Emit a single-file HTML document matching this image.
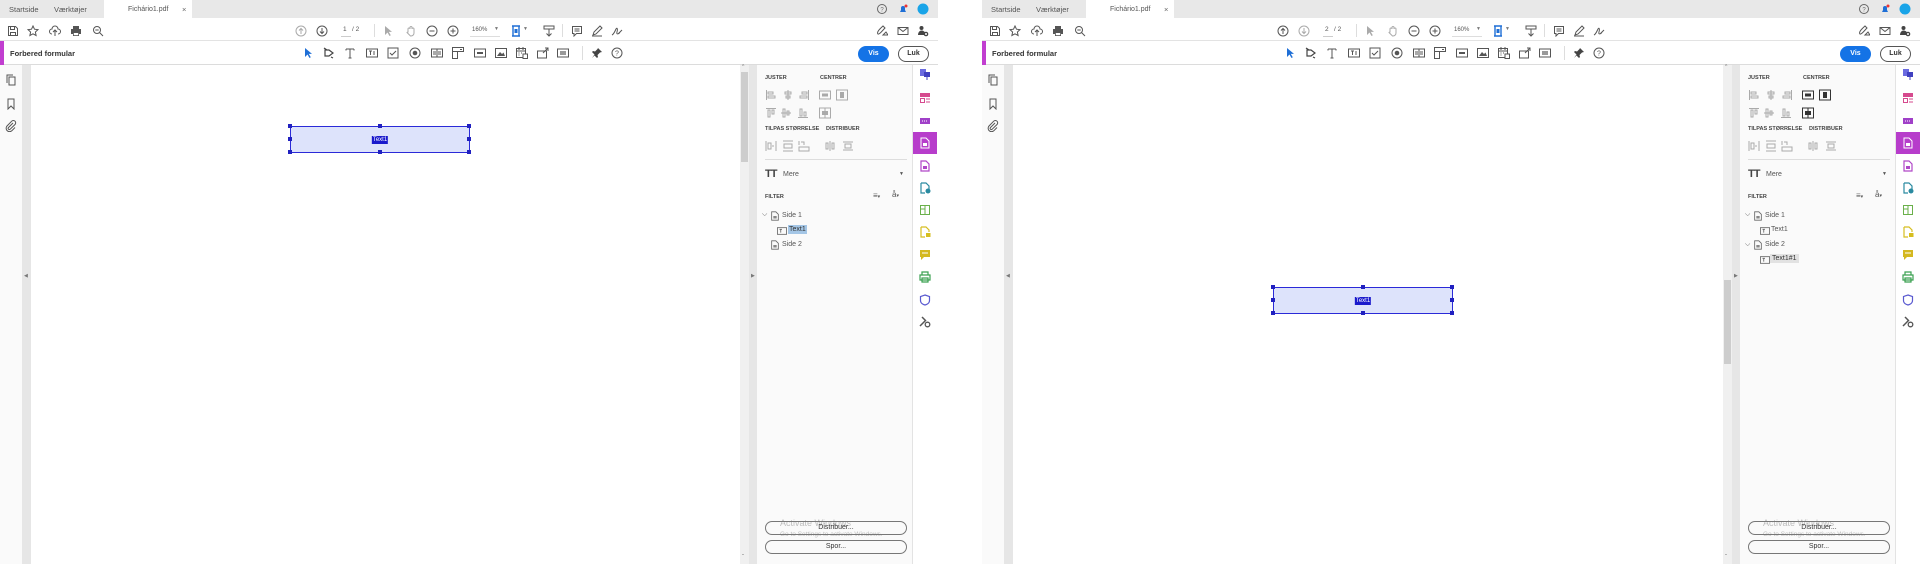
<!DOCTYPE html>
<html><head><meta charset="utf-8"><style>
*{margin:0;padding:0;box-sizing:border-box}
body{width:1920px;height:564px;background:#fff;position:relative;overflow:hidden;font-family:"Liberation Sans",sans-serif;color:#333}
.w{position:absolute;top:0;height:564px;width:938px;overflow:hidden;background:#fff}
.a{position:absolute}
.tabs{left:0;top:0;width:100%;height:18px;background:#e8e8e8}
.t{font-size:7.5px;color:#555;position:absolute;top:5px}
.act{left:104px;top:0;width:88px;height:19px;background:#fff}
.tb{left:0;top:18px;width:100%;height:23px;background:#fff;border-bottom:1px solid #e3e3e3}
.fb{left:0;top:41px;width:100%;height:24px;background:#fff;border-bottom:1px solid #dcdcdc}
.ic{position:absolute;width:12px;height:12px}
.ic svg{width:100%;height:100%;display:block}
.gstrip{left:22px;top:65px;width:9px;height:499px;background:#e6e6e6}
.nav{left:0;top:65px;width:22px;height:499px;background:#fafafa}
.vsb{top:65px;width:9px;height:499px;background:#f0f0f0}
.div{top:65px;width:9px;height:499px;background:#e6e6e6}
.panel{top:65px;width:156px;height:499px;background:#fafafa;border-right:1px solid #e3e3e3}
.strip{top:65px;width:25px;height:499px;background:#fff}
.h{font-size:5.5px;font-weight:bold;color:#444;position:absolute}
.s{font-size:7px;color:#555;position:absolute}
.btn{position:absolute;width:142px;height:14px;border:1px solid #777;border-radius:8px;font-size:7px;color:#333;text-align:center;line-height:12px}
.field{position:absolute;width:180px;height:27px;border:1.5px solid #2a2ad8;background:#dde3fb}
.hd{position:absolute;width:4px;height:4px;background:#2020c0}
.fl{position:absolute;left:50%;top:50%;transform:translate(-50%,-50%);background:#1a1acc;color:#fff;font-size:6px;padding:0 1px;line-height:8px}
.wm{position:absolute;color:#bdbdbd;font-size:9px}
</style></head><body>

<!-- ================= LEFT WINDOW ================= -->
<div class="w" style="left:0">
 <div class="a tabs"></div>
 <div class="a act"></div>
 <div class="t" style="left:9px">Startside</div>
 <div class="t" style="left:54px">Værktøjer</div>
 <div class="t" style="left:128px;top:6px;font-size:7px">Fichário1.pdf</div>
 <div class="t" style="left:182px;color:#666">×</div>
 <div class="ic" style="left:876px;top:3px"><svg viewBox="0 0 12 12"><circle cx="6" cy="6" r="4.5" fill="none" stroke="#666"/><text x="6" y="8.5" font-size="6" text-anchor="middle" fill="#666">?</text></svg></div>
 <div class="ic" style="left:897px;top:3px"><svg viewBox="0 0 12 12"><path d="M3 9h6L8 7V5a2 2 0 0 0-4 0v2z" fill="#1f6fd6"/><circle cx="9" cy="3" r="1.5" fill="#e33"/></svg></div>
 <div class="ic" style="left:917px;top:3px"><svg viewBox="0 0 12 12"><circle cx="6" cy="6" r="5.5" fill="#19a4e8"/></svg></div>

 <div class="a tb"></div>
 <div class="ic" style="left:7px;top:25px"><svg viewBox="0 0 12 12"><path d="M1.5 1.5h7l2 2v7h-9z M3.5 1.5v3h4v-3 M3.5 10.5v-3h5v3" fill="none" stroke="#555"/></svg></div>
 <div class="ic" style="left:27px;top:25px"><svg viewBox="0 0 12 12"><path d="M6 1l1.5 3.2 3.5.4-2.6 2.4.7 3.5L6 8.8 2.9 10.5l.7-3.5L1 4.6l3.5-.4z" fill="none" stroke="#555"/></svg></div>
 <div class="ic" style="left:49px;top:25px"><svg viewBox="0 0 12 12"><path d="M3 9a2.5 2.5 0 0 1 0-5 3 3 0 0 1 6 0 2.5 2.5 0 0 1 0 5M6 11V5M4 7l2-2 2 2" fill="none" stroke="#555"/></svg></div>
 <div class="ic" style="left:70px;top:25px"><svg viewBox="0 0 12 12"><path d="M3 1h6v3H3zM1 4h10v5H1zM3 7h6v4H3z" fill="#555"/><rect x="3.8" y="8" width="4.4" height="2.2" fill="#fff"/></svg></div>
 <div class="ic" style="left:92px;top:25px"><svg viewBox="0 0 12 12"><circle cx="5" cy="5" r="3.5" fill="none" stroke="#555"/><path d="M7.5 7.5l3.5 3.5M3.3 5h3.4" stroke="#555"/></svg></div>
 <div class="ic" style="left:295px;top:25px"><svg viewBox="0 0 12 12"><circle cx="6" cy="6" r="5" fill="none" stroke="#aaa"/><path d="M6 9V3.5M4 5.5l2-2 2 2" fill="none" stroke="#aaa"/></svg></div>
 <div class="ic" style="left:316px;top:25px"><svg viewBox="0 0 12 12"><circle cx="6" cy="6" r="5" fill="none" stroke="#555"/><path d="M6 3v5.5M4 6.5l2 2 2-2" fill="none" stroke="#555"/></svg></div>
 <div class="s" style="left:343px;top:26px;font-size:6.5px">1&nbsp;&nbsp; / 2</div>
 <div class="a" style="left:341px;top:36px;width:10px;height:1px;background:#ccc"></div>
 <div class="a" style="left:374px;top:24px;width:1px;height:13px;background:#ddd"></div>
 <div class="ic" style="left:382px;top:25px"><svg viewBox="0 0 12 12"><path d="M3 1v9l2.5-2.5 2 3.5 1.3-.7-2-3.4H10z" fill="#aaa"/></svg></div>
 <div class="ic" style="left:405px;top:25px"><svg viewBox="0 0 12 12"><path d="M3 7V4a1 1 0 0 1 2 0V2.5a1 1 0 0 1 2 0V4a1 1 0 0 1 2 0v4a3 3 0 0 1-3 3H5.5L2 7.5a1 1 0 0 1 1-.5z" fill="none" stroke="#aaa"/></svg></div>
 <div class="ic" style="left:426px;top:25px"><svg viewBox="0 0 12 12"><circle cx="6" cy="6" r="5" fill="none" stroke="#555"/><path d="M3.5 6h5" stroke="#555"/></svg></div>
 <div class="ic" style="left:447px;top:25px"><svg viewBox="0 0 12 12"><circle cx="6" cy="6" r="5" fill="none" stroke="#555"/><path d="M3.5 6h5M6 3.5v5" stroke="#555"/></svg></div>
 <div class="s" style="left:472px;top:27px;font-size:6px">160%</div>
 <div class="s" style="left:494px;top:26px;font-size:5px;color:#777">▼</div>
 <div class="a" style="left:470px;top:36px;width:30px;height:1px;background:#ddd"></div>
 <div class="ic" style="left:511px;top:25px"><svg viewBox="0 0 12 12"><path d="M1 1h8M1 11h8M2 1v10M8 1v10" stroke="#1f6fd6" stroke-width="1.4"/><rect x="3.5" y="4" width="3" height="4" fill="#1f6fd6"/></svg></div>
 <div class="s" style="left:523px;top:26px;font-size:5px;color:#777">▼</div>
 <div class="ic" style="left:543px;top:25px"><svg viewBox="0 0 12 12"><rect x="1" y="1" width="10" height="3" fill="none" stroke="#555"/><path d="M6 4v7M3.5 8.5L6 11l2.5-2.5" fill="none" stroke="#555"/></svg></div>
 <div class="a" style="left:562px;top:24px;width:1px;height:13px;background:#ddd"></div>
 <div class="ic" style="left:571px;top:25px"><svg viewBox="0 0 12 12"><path d="M1.5 1.5h9v7h-5l-2.5 2.5v-2.5h-1.5z M3.5 4h5M3.5 6h5" fill="none" stroke="#555"/></svg></div>
 <div class="ic" style="left:591px;top:25px"><svg viewBox="0 0 12 12"><path d="M2 10l1-3 6-6 2 2-6 6zM1 11h10" fill="none" stroke="#555"/></svg></div>
 <div class="ic" style="left:611px;top:25px"><svg viewBox="0 0 12 12"><path d="M1 10c2-1 3-4 4-6s2 0 1 3 2 2 3 0M7 9l4-4" fill="none" stroke="#555"/></svg></div>
 <div class="ic" style="left:876px;top:25px"><svg viewBox="0 0 12 12"><path d="M2 9c-2-2 3-6 5-8l2 2c-2 2-6 7-7 6zM7 10l3-3 2 3z" fill="none" stroke="#555"/></svg></div>
 <div class="ic" style="left:897px;top:25px"><svg viewBox="0 0 12 12"><rect x="1" y="2.5" width="10" height="7" fill="none" stroke="#555"/><path d="M1 2.5l5 4 5-4" fill="none" stroke="#555"/></svg></div>
 <div class="ic" style="left:917px;top:25px"><svg viewBox="0 0 12 12"><circle cx="4.5" cy="3" r="2" fill="#444"/><path d="M1 10c0-3 2-4.5 3.5-4.5S8 6.5 8 8v2z" fill="#444"/><circle cx="9" cy="9" r="2.3" fill="#444"/><circle cx="9" cy="9" r="1" fill="#fff"/></svg></div>

 <div class="a fb"></div>
 <div class="a" style="left:0;top:41px;width:4px;height:24px;background:#c13ed0"></div>
 <div class="a" style="left:10px;top:49px;font-size:7.5px;font-weight:bold;color:#333">Forbered formular</div>
 <div class="ic" style="left:302px;top:47px"><svg viewBox="0 0 12 12"><path d="M3 1v9l2.5-2.5 2 3.5 1.3-.7-2-3.4H10z" fill="#1f6fd6"/></svg></div>
 <div class="ic" style="left:323px;top:47px"><svg viewBox="0 0 12 12"><path d="M2 3h4l4 3-4 3H2zM1 1l3 2M8 10l2 1" fill="none" stroke="#444" stroke-width="1.2"/></svg></div>
 <div class="ic" style="left:344px;top:47px"><svg viewBox="0 0 12 12"><path d="M2 2h8M6 2v9M2 2v1.5M10 2v1.5M4.5 11h3" fill="none" stroke="#555"/></svg></div>
 <div class="ic" style="left:366px;top:47px"><svg viewBox="0 0 12 12"><rect x=".5" y="2" width="11" height="8" fill="none" stroke="#555"/><path d="M3 4h3M4.5 4v4M8 4v4" stroke="#555"/></svg></div>
 <div class="ic" style="left:387px;top:47px"><svg viewBox="0 0 12 12"><rect x="1" y="1" width="10" height="10" fill="none" stroke="#555"/><path d="M3 6l2 2 4-4" fill="none" stroke="#555"/></svg></div>
 <div class="ic" style="left:409px;top:47px"><svg viewBox="0 0 12 12"><circle cx="6" cy="6" r="5" fill="none" stroke="#555"/><circle cx="6" cy="6" r="2.3" fill="#555"/></svg></div>
 <div class="ic" style="left:431px;top:47px"><svg viewBox="0 0 12 12"><rect x=".5" y="2" width="11" height="8" fill="none" stroke="#555"/><path d="M6 2v8M2 5h3M7 5h3M2 7h3M7 7h3" stroke="#555"/></svg></div>
 <div class="ic" style="left:452px;top:47px"><svg viewBox="0 0 12 12"><rect x=".5" y=".5" width="11" height="4" fill="none" stroke="#555"/><rect x=".5" y="4.5" width="5" height="7" fill="none" stroke="#555"/><path d="M8 2.5h2" stroke="#555"/></svg></div>
 <div class="ic" style="left:474px;top:47px"><svg viewBox="0 0 12 12"><rect x=".5" y="2" width="11" height="8" fill="none" stroke="#555"/><path d="M3 6h6" stroke="#555" stroke-width="2"/></svg></div>
 <div class="ic" style="left:495px;top:47px"><svg viewBox="0 0 12 12"><rect x=".5" y="1.5" width="11" height="9" fill="none" stroke="#555"/><path d="M2 9l3-4 2 2 1.5-1.5L10 9z" fill="#555"/></svg></div>
 <div class="ic" style="left:516px;top:47px"><svg viewBox="0 0 12 12"><rect x=".5" y="1.5" width="9" height="9" fill="none" stroke="#555"/><path d="M.5 4h9M3 0v3M7 0v3M2.5 6h1M5 6h1M2.5 8h1" stroke="#555"/><rect x="7" y="7" width="4.5" height="4.5" fill="#fff" stroke="#555"/></svg></div>
 <div class="ic" style="left:537px;top:47px"><svg viewBox="0 0 12 12"><rect x=".5" y="4" width="9" height="7" fill="none" stroke="#555"/><path d="M6 6l5-5M8 1h3v3" fill="none" stroke="#555"/></svg></div>
 <div class="ic" style="left:557px;top:47px"><svg viewBox="0 0 12 12"><rect x=".5" y="2" width="11" height="8" fill="none" stroke="#555"/><rect x="3" y="4" width="6" height="4" fill="#999"/></svg></div>
 <div class="a" style="left:582px;top:46px;width:1px;height:14px;background:#ddd"></div>
 <div class="ic" style="left:591px;top:47px"><svg viewBox="0 0 12 12"><path d="M7 1l4 4-2 .5-2.5 2.5.5 2-1 1-2.5-2.5L1 11l2.5-3.5L1 5l1-1 2 .5L6.5 2z" fill="#444"/></svg></div>
 <div class="ic" style="left:611px;top:47px"><svg viewBox="0 0 12 12"><circle cx="6" cy="6" r="5" fill="none" stroke="#555"/><text x="6" y="8.5" font-size="7" text-anchor="middle" fill="#555">?</text></svg></div>
 <div class="a" style="left:858px;top:46px;width:31px;height:16px;border-radius:8px;background:#1473e6;color:#fff;font-size:7px;font-weight:bold;text-align:center;line-height:16px">Vis</div>
 <div class="a" style="left:898px;top:46px;width:31px;height:16px;border-radius:8px;border:1px solid #555;color:#333;font-size:7px;font-weight:bold;text-align:center;line-height:14px">Luk</div>

 <div class="a nav"></div>
 <div class="ic" style="left:5px;top:74px"><svg viewBox="0 0 12 12"><path d="M4 3h6v8H4zM2 9V1h6" fill="none" stroke="#555"/></svg></div>
 <div class="ic" style="left:5px;top:98px"><svg viewBox="0 0 12 12"><path d="M3 1h6v10L6 8l-3 3z" fill="none" stroke="#555"/></svg></div>
 <div class="ic" style="left:5px;top:120px"><svg viewBox="0 0 12 12"><path d="M8 3L3.5 7.5a1.2 1.2 0 0 0 1.7 1.7L10 4.5a2.3 2.3 0 0 0-3.3-3.3L2 6a3.4 3.4 0 0 0 4.8 4.8L10 7.5" fill="none" stroke="#555"/></svg></div>
 <div class="a gstrip"></div>
 <div class="a" style="left:24px;top:273px;font-size:5px;color:#777">◀</div>

 <div class="field" style="left:290px;top:126px">
  <div class="fl">Text1</div>
 </div>
 <div class="hd" style="left:288px;top:124px"></div><div class="hd" style="left:378px;top:124px"></div><div class="hd" style="left:467px;top:124px"></div>
 <div class="hd" style="left:288px;top:137px"></div><div class="hd" style="left:467px;top:137px"></div>
 <div class="hd" style="left:288px;top:150px"></div><div class="hd" style="left:378px;top:150px"></div><div class="hd" style="left:467px;top:150px"></div>

 <div class="a vsb" style="left:740px"></div>
 <div class="a" style="left:741px;top:72px;width:7px;height:90px;background:#cdcdcd"></div>
 <div class="a" style="left:742px;top:64px;font-size:5px;color:#777">^</div>
 <div class="a" style="left:742px;top:555px;font-size:6px;color:#777">ˇ</div>
 <div class="a div" style="left:749px"></div>
 <div class="a" style="left:751px;top:273px;font-size:5px;color:#777">▶</div>

 <div class="a panel" style="left:757px"></div>
 <div class="h" style="left:765px;top:75px">JUSTER</div>
 <div class="h" style="left:820px;top:75px">CENTRER</div>
 <div class="ic" style="left:765px;top:89px"><svg viewBox="0 0 12 12"><path d="M1.5 1v10M3 3h5v2H3zM3 7h7v2H3z" fill="none" stroke="#aaa"/></svg></div>
 <div class="ic" style="left:782px;top:89px"><svg viewBox="0 0 12 12"><path d="M6 1v10M3 3h6v2H3zM4 7h4v2H4z" fill="none" stroke="#aaa"/></svg></div>
 <div class="ic" style="left:798px;top:89px"><svg viewBox="0 0 12 12"><path d="M10.5 1v10M4 3h5v2H4zM2 7h7v2H2z" fill="none" stroke="#aaa"/></svg></div>
 <div class="ic" style="left:819px;top:89px"><svg viewBox="0 0 12 12"><rect x=".5" y="2" width="11" height="8" fill="none" stroke="#aaa"/><rect x="3" y="4.5" width="6" height="3" fill="#aaa"/></svg></div>
 <div class="ic" style="left:836px;top:89px"><svg viewBox="0 0 12 12"><rect x=".5" y="1" width="11" height="10" fill="none" stroke="#aaa"/><rect x="4" y="3" width="4" height="6" fill="#aaa"/></svg></div>
 <div class="ic" style="left:765px;top:107px"><svg viewBox="0 0 12 12"><path d="M1 1.5h10M3 3h2v7H3zM7 3h2v4H7z" fill="none" stroke="#aaa"/></svg></div>
 <div class="ic" style="left:780px;top:107px"><svg viewBox="0 0 12 12"><path d="M1 6h10M3 2h2v8H3zM7 4h2v4H7z" fill="none" stroke="#aaa"/></svg></div>
 <div class="ic" style="left:797px;top:107px"><svg viewBox="0 0 12 12"><path d="M1 10.5h10M3 2h2v7H3zM7 5h2v4H7z" fill="none" stroke="#aaa"/></svg></div>
 <div class="ic" style="left:819px;top:107px"><svg viewBox="0 0 12 12"><rect x=".5" y="1" width="11" height="10" fill="none" stroke="#aaa"/><rect x="3" y="4" width="6" height="4" fill="#aaa"/><path d="M6 1v10" stroke="#aaa"/></svg></div>
 <div class="h" style="left:765px;top:126px">TILPAS STØRRELSE</div>
 <div class="h" style="left:826px;top:126px">DISTRIBUER</div>
 <div class="ic" style="left:765px;top:140px"><svg viewBox="0 0 12 12"><path d="M1 1v10M11 1v10M3 3h3v6H3zM8 5v2" fill="none" stroke="#aaa"/></svg></div>
 <div class="ic" style="left:782px;top:140px"><svg viewBox="0 0 12 12"><path d="M1 1h10M1 11h10M2 4h8v4H2z" fill="none" stroke="#aaa"/></svg></div>
 <div class="ic" style="left:798px;top:140px"><svg viewBox="0 0 12 12"><path d="M1 1v4M1 7h10v4H1zM3 2h3v3" fill="none" stroke="#aaa"/></svg></div>
 <div class="ic" style="left:824px;top:140px"><svg viewBox="0 0 12 12"><path d="M2 3h2v6H2zM8 3h2v6H8zM6 1v10" fill="none" stroke="#aaa"/></svg></div>
 <div class="ic" style="left:842px;top:140px"><svg viewBox="0 0 12 12"><path d="M1 2h10M3 4h6v4H3zM1 10h10" fill="none" stroke="#aaa"/></svg></div>
 <div class="a" style="left:765px;top:159px;width:142px;height:1px;background:#ddd"></div>
 <div class="a" style="left:765px;top:168px;font-size:11px;font-weight:bold;color:#444;letter-spacing:-1px">TT</div>
 <div class="s" style="left:783px;top:171px">Mere</div>
 <div class="s" style="left:899px;top:171px;font-size:5px">▼</div>
 <div class="h" style="left:765px;top:194px">FILTER</div>
 <div class="s" style="left:873px;top:191px;font-size:8px">≡<span style="font-size:5px">▾</span></div>
 <div class="s" style="left:892px;top:190px;font-size:8px">å<span style="font-size:5px">▾</span></div>
 <div class="s" style="left:762px;top:211px;font-size:7px">⌵</div>
 <div class="ic" style="left:770px;top:211px;width:10px;height:10px"><svg viewBox="0 0 12 12"><path d="M2 1h5l3 3v7H2z" fill="none" stroke="#666"/><path d="M4 6h4v3H4z" fill="#888"/></svg></div>
 <div class="s" style="left:782px;top:212px">Side 1</div>
 <div class="ic" style="left:777px;top:226px;width:10px;height:10px"><svg viewBox="0 0 12 12"><rect x=".5" y="2" width="11" height="8" fill="none" stroke="#666"/><path d="M3 4h3M4.5 4v4" stroke="#666"/></svg></div>
 <div class="s" style="left:788px;top:225px;background:#a4c6e6;padding:1px 1px;color:#333">Text1</div>
 <div class="ic" style="left:770px;top:240px;width:10px;height:10px"><svg viewBox="0 0 12 12"><path d="M2 1h5l3 3v7H2z" fill="none" stroke="#666"/><path d="M4 6h4v3H4z" fill="#888"/></svg></div>
 <div class="s" style="left:782px;top:241px">Side 2</div>

 <div class="wm" style="left:780px;top:518px">Activate Windows</div>
 <div class="wm" style="left:780px;top:531px;font-size:6.5px">Go to Settings to activate Windows.</div>
 <div class="btn" style="left:765px;top:521px">Distribuer...</div>
 <div class="btn" style="left:765px;top:540px">Spor...</div>

 <div class="a strip" style="left:913px"></div>
 <div class="a" style="left:913px;top:132px;width:24px;height:22px;background:#b73dcb"></div>
 <div class="ic" style="left:919px;top:68px"><svg viewBox="0 0 12 12"><rect x="1" y="1" width="6" height="7" fill="#6a6ae0"/><rect x="5" y="4" width="6" height="5" fill="#4040c0"/><path d="M8 9v3" stroke="#4040c0"/></svg></div>
 <div class="ic" style="left:919px;top:92px"><svg viewBox="0 0 12 12"><rect x="1" y="1" width="10" height="4" fill="#d64a8e"/><rect x="1.5" y="6.5" width="4" height="4" fill="none" stroke="#d64a8e"/><path d="M7 7h4M7 10h4" stroke="#d64a8e"/></svg></div>
 <div class="ic" style="left:919px;top:115px"><svg viewBox="0 0 12 12"><rect x="1" y="3" width="10" height="6" fill="#a040c8"/><path d="M3 6h6" stroke="#fff" stroke-dasharray="1 1"/></svg></div>
 <div class="ic" style="left:919px;top:137px"><svg viewBox="0 0 12 12"><path d="M2 1h5l3 3v7H2z" fill="none" stroke="#fff"/><rect x="4" y="6" width="4" height="3" fill="#fff"/></svg></div>
 <div class="ic" style="left:919px;top:160px"><svg viewBox="0 0 12 12"><path d="M2 1h5l3 3v7H2z" fill="none" stroke="#b048c8" stroke-width="1.2"/><rect x="4" y="6" width="4" height="3" fill="#b048c8"/></svg></div>
 <div class="ic" style="left:919px;top:182px"><svg viewBox="0 0 12 12"><path d="M2 1h5l3 3v3M2 1v10h4" fill="none" stroke="#2a8aa0" stroke-width="1.2"/><circle cx="9" cy="9" r="2.5" fill="#2a8aa0"/></svg></div>
 <div class="ic" style="left:919px;top:204px"><svg viewBox="0 0 12 12"><rect x="1.5" y="1.5" width="9" height="9" fill="none" stroke="#6ab04a"/><path d="M6 1v10M2 5h4" stroke="#6ab04a"/></svg></div>
 <div class="ic" style="left:919px;top:226px"><svg viewBox="0 0 12 12"><path d="M2 1h5l3 3v2M2 1v10h4" fill="none" stroke="#d6be20" stroke-width="1.2"/><rect x="7" y="7" width="4.5" height="4" fill="#d6be20"/></svg></div>
 <div class="ic" style="left:919px;top:249px"><svg viewBox="0 0 12 12"><path d="M1 1h10v7H5l-3 3V8H1z" fill="#d4b820"/><path d="M3 4h6" stroke="#fff"/></svg></div>
 <div class="ic" style="left:919px;top:271px"><svg viewBox="0 0 12 12"><path d="M3 1h6v3H3zM1 4h10v5H1zM3 7h6v4H3z" fill="none" stroke="#3aa050" stroke-width="1.2"/></svg></div>
 <div class="ic" style="left:919px;top:294px"><svg viewBox="0 0 12 12"><path d="M6 1l4.5 1.5v4C10.5 9 8 10.5 6 11 4 10.5 1.5 9 1.5 6.5v-4z" fill="none" stroke="#5a5ad0" stroke-width="1.2"/></svg></div>
 <div class="ic" style="left:919px;top:316px"><svg viewBox="0 0 12 12"><path d="M1 10l5-5M3 1l4 4" stroke="#555" stroke-width="1.5"/><circle cx="8.5" cy="8.5" r="2.3" fill="none" stroke="#555" stroke-width="1.3"/></svg></div>
</div>

<!-- ================= RIGHT WINDOW ================= -->
<div class="w" style="left:982px">
 <div class="a tabs"></div>
 <div class="a act"></div>
 <div class="t" style="left:9px">Startside</div>
 <div class="t" style="left:54px">Værktøjer</div>
 <div class="t" style="left:128px;top:6px;font-size:7px">Fichário1.pdf</div>
 <div class="t" style="left:182px;color:#666">×</div>
 <div class="ic" style="left:876px;top:3px"><svg viewBox="0 0 12 12"><circle cx="6" cy="6" r="4.5" fill="none" stroke="#666"/><text x="6" y="8.5" font-size="6" text-anchor="middle" fill="#666">?</text></svg></div>
 <div class="ic" style="left:897px;top:3px"><svg viewBox="0 0 12 12"><path d="M3 9h6L8 7V5a2 2 0 0 0-4 0v2z" fill="#1f6fd6"/><circle cx="9" cy="3" r="1.5" fill="#e33"/></svg></div>
 <div class="ic" style="left:917px;top:3px"><svg viewBox="0 0 12 12"><circle cx="6" cy="6" r="5.5" fill="#19a4e8"/></svg></div>

 <div class="a tb"></div>
 <div class="ic" style="left:7px;top:25px"><svg viewBox="0 0 12 12"><path d="M1.5 1.5h7l2 2v7h-9z M3.5 1.5v3h4v-3 M3.5 10.5v-3h5v3" fill="none" stroke="#555"/></svg></div>
 <div class="ic" style="left:27px;top:25px"><svg viewBox="0 0 12 12"><path d="M6 1l1.5 3.2 3.5.4-2.6 2.4.7 3.5L6 8.8 2.9 10.5l.7-3.5L1 4.6l3.5-.4z" fill="none" stroke="#555"/></svg></div>
 <div class="ic" style="left:49px;top:25px"><svg viewBox="0 0 12 12"><path d="M3 9a2.5 2.5 0 0 1 0-5 3 3 0 0 1 6 0 2.5 2.5 0 0 1 0 5M6 11V5M4 7l2-2 2 2" fill="none" stroke="#555"/></svg></div>
 <div class="ic" style="left:70px;top:25px"><svg viewBox="0 0 12 12"><path d="M3 1h6v3H3zM1 4h10v5H1zM3 7h6v4H3z" fill="#555"/><rect x="3.8" y="8" width="4.4" height="2.2" fill="#fff"/></svg></div>
 <div class="ic" style="left:92px;top:25px"><svg viewBox="0 0 12 12"><circle cx="5" cy="5" r="3.5" fill="none" stroke="#555"/><path d="M7.5 7.5l3.5 3.5M3.3 5h3.4" stroke="#555"/></svg></div>
 <div class="ic" style="left:295px;top:25px"><svg viewBox="0 0 12 12"><circle cx="6" cy="6" r="5" fill="none" stroke="#555"/><path d="M6 9V3.5M4 5.5l2-2 2 2" fill="none" stroke="#555"/></svg></div>
 <div class="ic" style="left:316px;top:25px"><svg viewBox="0 0 12 12"><circle cx="6" cy="6" r="5" fill="none" stroke="#aaa"/><path d="M6 3v5.5M4 6.5l2 2 2-2" fill="none" stroke="#aaa"/></svg></div>
 <div class="s" style="left:343px;top:26px;font-size:6.5px">2&nbsp;&nbsp; / 2</div>
 <div class="a" style="left:341px;top:36px;width:10px;height:1px;background:#ccc"></div>
 <div class="a" style="left:374px;top:24px;width:1px;height:13px;background:#ddd"></div>
 <div class="ic" style="left:382px;top:25px"><svg viewBox="0 0 12 12"><path d="M3 1v9l2.5-2.5 2 3.5 1.3-.7-2-3.4H10z" fill="#aaa"/></svg></div>
 <div class="ic" style="left:405px;top:25px"><svg viewBox="0 0 12 12"><path d="M3 7V4a1 1 0 0 1 2 0V2.5a1 1 0 0 1 2 0V4a1 1 0 0 1 2 0v4a3 3 0 0 1-3 3H5.5L2 7.5a1 1 0 0 1 1-.5z" fill="none" stroke="#aaa"/></svg></div>
 <div class="ic" style="left:426px;top:25px"><svg viewBox="0 0 12 12"><circle cx="6" cy="6" r="5" fill="none" stroke="#555"/><path d="M3.5 6h5" stroke="#555"/></svg></div>
 <div class="ic" style="left:447px;top:25px"><svg viewBox="0 0 12 12"><circle cx="6" cy="6" r="5" fill="none" stroke="#555"/><path d="M3.5 6h5M6 3.5v5" stroke="#555"/></svg></div>
 <div class="s" style="left:472px;top:27px;font-size:6px">160%</div>
 <div class="s" style="left:494px;top:26px;font-size:5px;color:#777">▼</div>
 <div class="a" style="left:470px;top:36px;width:30px;height:1px;background:#ddd"></div>
 <div class="ic" style="left:511px;top:25px"><svg viewBox="0 0 12 12"><path d="M1 1h8M1 11h8M2 1v10M8 1v10" stroke="#1f6fd6" stroke-width="1.4"/><rect x="3.5" y="4" width="3" height="4" fill="#1f6fd6"/></svg></div>
 <div class="s" style="left:523px;top:26px;font-size:5px;color:#777">▼</div>
 <div class="ic" style="left:543px;top:25px"><svg viewBox="0 0 12 12"><rect x="1" y="1" width="10" height="3" fill="none" stroke="#555"/><path d="M6 4v7M3.5 8.5L6 11l2.5-2.5" fill="none" stroke="#555"/></svg></div>
 <div class="a" style="left:562px;top:24px;width:1px;height:13px;background:#ddd"></div>
 <div class="ic" style="left:571px;top:25px"><svg viewBox="0 0 12 12"><path d="M1.5 1.5h9v7h-5l-2.5 2.5v-2.5h-1.5z M3.5 4h5M3.5 6h5" fill="none" stroke="#555"/></svg></div>
 <div class="ic" style="left:591px;top:25px"><svg viewBox="0 0 12 12"><path d="M2 10l1-3 6-6 2 2-6 6zM1 11h10" fill="none" stroke="#555"/></svg></div>
 <div class="ic" style="left:611px;top:25px"><svg viewBox="0 0 12 12"><path d="M1 10c2-1 3-4 4-6s2 0 1 3 2 2 3 0M7 9l4-4" fill="none" stroke="#555"/></svg></div>
 <div class="ic" style="left:876px;top:25px"><svg viewBox="0 0 12 12"><path d="M2 9c-2-2 3-6 5-8l2 2c-2 2-6 7-7 6zM7 10l3-3 2 3z" fill="none" stroke="#555"/></svg></div>
 <div class="ic" style="left:897px;top:25px"><svg viewBox="0 0 12 12"><rect x="1" y="2.5" width="10" height="7" fill="none" stroke="#555"/><path d="M1 2.5l5 4 5-4" fill="none" stroke="#555"/></svg></div>
 <div class="ic" style="left:917px;top:25px"><svg viewBox="0 0 12 12"><circle cx="4.5" cy="3" r="2" fill="#444"/><path d="M1 10c0-3 2-4.5 3.5-4.5S8 6.5 8 8v2z" fill="#444"/><circle cx="9" cy="9" r="2.3" fill="#444"/><circle cx="9" cy="9" r="1" fill="#fff"/></svg></div>

 <div class="a fb"></div>
 <div class="a" style="left:0;top:41px;width:4px;height:24px;background:#c13ed0"></div>
 <div class="a" style="left:10px;top:49px;font-size:7.5px;font-weight:bold;color:#333">Forbered formular</div>
 <div class="ic" style="left:302px;top:47px"><svg viewBox="0 0 12 12"><path d="M3 1v9l2.5-2.5 2 3.5 1.3-.7-2-3.4H10z" fill="#1f6fd6"/></svg></div>
 <div class="ic" style="left:323px;top:47px"><svg viewBox="0 0 12 12"><path d="M2 3h4l4 3-4 3H2zM1 1l3 2M8 10l2 1" fill="none" stroke="#444" stroke-width="1.2"/></svg></div>
 <div class="ic" style="left:344px;top:47px"><svg viewBox="0 0 12 12"><path d="M2 2h8M6 2v9M2 2v1.5M10 2v1.5M4.5 11h3" fill="none" stroke="#555"/></svg></div>
 <div class="ic" style="left:366px;top:47px"><svg viewBox="0 0 12 12"><rect x=".5" y="2" width="11" height="8" fill="none" stroke="#555"/><path d="M3 4h3M4.5 4v4M8 4v4" stroke="#555"/></svg></div>
 <div class="ic" style="left:387px;top:47px"><svg viewBox="0 0 12 12"><rect x="1" y="1" width="10" height="10" fill="none" stroke="#555"/><path d="M3 6l2 2 4-4" fill="none" stroke="#555"/></svg></div>
 <div class="ic" style="left:409px;top:47px"><svg viewBox="0 0 12 12"><circle cx="6" cy="6" r="5" fill="none" stroke="#555"/><circle cx="6" cy="6" r="2.3" fill="#555"/></svg></div>
 <div class="ic" style="left:431px;top:47px"><svg viewBox="0 0 12 12"><rect x=".5" y="2" width="11" height="8" fill="none" stroke="#555"/><path d="M6 2v8M2 5h3M7 5h3M2 7h3M7 7h3" stroke="#555"/></svg></div>
 <div class="ic" style="left:452px;top:47px"><svg viewBox="0 0 12 12"><rect x=".5" y=".5" width="11" height="4" fill="none" stroke="#555"/><rect x=".5" y="4.5" width="5" height="7" fill="none" stroke="#555"/><path d="M8 2.5h2" stroke="#555"/></svg></div>
 <div class="ic" style="left:474px;top:47px"><svg viewBox="0 0 12 12"><rect x=".5" y="2" width="11" height="8" fill="none" stroke="#555"/><path d="M3 6h6" stroke="#555" stroke-width="2"/></svg></div>
 <div class="ic" style="left:495px;top:47px"><svg viewBox="0 0 12 12"><rect x=".5" y="1.5" width="11" height="9" fill="none" stroke="#555"/><path d="M2 9l3-4 2 2 1.5-1.5L10 9z" fill="#555"/></svg></div>
 <div class="ic" style="left:516px;top:47px"><svg viewBox="0 0 12 12"><rect x=".5" y="1.5" width="9" height="9" fill="none" stroke="#555"/><path d="M.5 4h9M3 0v3M7 0v3M2.5 6h1M5 6h1M2.5 8h1" stroke="#555"/><rect x="7" y="7" width="4.5" height="4.5" fill="#fff" stroke="#555"/></svg></div>
 <div class="ic" style="left:537px;top:47px"><svg viewBox="0 0 12 12"><rect x=".5" y="4" width="9" height="7" fill="none" stroke="#555"/><path d="M6 6l5-5M8 1h3v3" fill="none" stroke="#555"/></svg></div>
 <div class="ic" style="left:557px;top:47px"><svg viewBox="0 0 12 12"><rect x=".5" y="2" width="11" height="8" fill="none" stroke="#555"/><rect x="3" y="4" width="6" height="4" fill="#999"/></svg></div>
 <div class="a" style="left:582px;top:46px;width:1px;height:14px;background:#ddd"></div>
 <div class="ic" style="left:591px;top:47px"><svg viewBox="0 0 12 12"><path d="M7 1l4 4-2 .5-2.5 2.5.5 2-1 1-2.5-2.5L1 11l2.5-3.5L1 5l1-1 2 .5L6.5 2z" fill="#444"/></svg></div>
 <div class="ic" style="left:611px;top:47px"><svg viewBox="0 0 12 12"><circle cx="6" cy="6" r="5" fill="none" stroke="#555"/><text x="6" y="8.5" font-size="7" text-anchor="middle" fill="#555">?</text></svg></div>
 <div class="a" style="left:858px;top:46px;width:31px;height:16px;border-radius:8px;background:#1473e6;color:#fff;font-size:7px;font-weight:bold;text-align:center;line-height:16px">Vis</div>
 <div class="a" style="left:898px;top:46px;width:31px;height:16px;border-radius:8px;border:1px solid #555;color:#333;font-size:7px;font-weight:bold;text-align:center;line-height:14px">Luk</div>

 <div class="a nav"></div>
 <div class="ic" style="left:5px;top:74px"><svg viewBox="0 0 12 12"><path d="M4 3h6v8H4zM2 9V1h6" fill="none" stroke="#555"/></svg></div>
 <div class="ic" style="left:5px;top:98px"><svg viewBox="0 0 12 12"><path d="M3 1h6v10L6 8l-3 3z" fill="none" stroke="#555"/></svg></div>
 <div class="ic" style="left:5px;top:120px"><svg viewBox="0 0 12 12"><path d="M8 3L3.5 7.5a1.2 1.2 0 0 0 1.7 1.7L10 4.5a2.3 2.3 0 0 0-3.3-3.3L2 6a3.4 3.4 0 0 0 4.8 4.8L10 7.5" fill="none" stroke="#555"/></svg></div>
 <div class="a gstrip"></div>
 <div class="a" style="left:24px;top:273px;font-size:5px;color:#777">◀</div>

 <div class="field" style="left:291px;top:287px">
  <div class="fl">Text1</div>
 </div>
 <div class="hd" style="left:289px;top:285px"></div><div class="hd" style="left:379px;top:285px"></div><div class="hd" style="left:468px;top:285px"></div>
 <div class="hd" style="left:289px;top:298px"></div><div class="hd" style="left:468px;top:298px"></div>
 <div class="hd" style="left:289px;top:311px"></div><div class="hd" style="left:379px;top:311px"></div><div class="hd" style="left:468px;top:311px"></div>

 <div class="a vsb" style="left:741px"></div>
 <div class="a" style="left:742px;top:280px;width:7px;height:84px;background:#cdcdcd"></div>
 <div class="a" style="left:743px;top:64px;font-size:5px;color:#777">^</div>
 <div class="a" style="left:743px;top:555px;font-size:6px;color:#777">ˇ</div>
 <div class="a div" style="left:750px"></div>
 <div class="a" style="left:752px;top:273px;font-size:5px;color:#777">▶</div>

 <div class="a panel" style="left:758px"></div>
 <div class="h" style="left:766px;top:75px">JUSTER</div>
 <div class="h" style="left:821px;top:75px">CENTRER</div>
 <div class="ic" style="left:766px;top:89px"><svg viewBox="0 0 12 12"><path d="M1.5 1v10M3 3h5v2H3zM3 7h7v2H3z" fill="none" stroke="#aaa"/></svg></div>
 <div class="ic" style="left:783px;top:89px"><svg viewBox="0 0 12 12"><path d="M6 1v10M3 3h6v2H3zM4 7h4v2H4z" fill="none" stroke="#aaa"/></svg></div>
 <div class="ic" style="left:799px;top:89px"><svg viewBox="0 0 12 12"><path d="M10.5 1v10M4 3h5v2H4zM2 7h7v2H2z" fill="none" stroke="#aaa"/></svg></div>
 <div class="ic" style="left:820px;top:89px"><svg viewBox="0 0 12 12"><rect x=".5" y="2" width="11" height="8" fill="none" stroke="#333"/><rect x="3" y="4.5" width="6" height="3" fill="#333"/></svg></div>
 <div class="ic" style="left:837px;top:89px"><svg viewBox="0 0 12 12"><rect x=".5" y="1" width="11" height="10" fill="none" stroke="#333"/><rect x="4" y="3" width="4" height="6" fill="#333"/></svg></div>
 <div class="ic" style="left:766px;top:107px"><svg viewBox="0 0 12 12"><path d="M1 1.5h10M3 3h2v7H3zM7 3h2v4H7z" fill="none" stroke="#aaa"/></svg></div>
 <div class="ic" style="left:781px;top:107px"><svg viewBox="0 0 12 12"><path d="M1 6h10M3 2h2v8H3zM7 4h2v4H7z" fill="none" stroke="#aaa"/></svg></div>
 <div class="ic" style="left:798px;top:107px"><svg viewBox="0 0 12 12"><path d="M1 10.5h10M3 2h2v7H3zM7 5h2v4H7z" fill="none" stroke="#aaa"/></svg></div>
 <div class="ic" style="left:820px;top:107px"><svg viewBox="0 0 12 12"><rect x=".5" y="1" width="11" height="10" fill="none" stroke="#333"/><rect x="3" y="4" width="6" height="4" fill="#333"/><path d="M6 1v10" stroke="#333"/></svg></div>
 <div class="h" style="left:766px;top:126px">TILPAS STØRRELSE</div>
 <div class="h" style="left:827px;top:126px">DISTRIBUER</div>
 <div class="ic" style="left:766px;top:140px"><svg viewBox="0 0 12 12"><path d="M1 1v10M11 1v10M3 3h3v6H3zM8 5v2" fill="none" stroke="#aaa"/></svg></div>
 <div class="ic" style="left:783px;top:140px"><svg viewBox="0 0 12 12"><path d="M1 1h10M1 11h10M2 4h8v4H2z" fill="none" stroke="#aaa"/></svg></div>
 <div class="ic" style="left:799px;top:140px"><svg viewBox="0 0 12 12"><path d="M1 1v4M1 7h10v4H1zM3 2h3v3" fill="none" stroke="#aaa"/></svg></div>
 <div class="ic" style="left:825px;top:140px"><svg viewBox="0 0 12 12"><path d="M2 3h2v6H2zM8 3h2v6H8zM6 1v10" fill="none" stroke="#aaa"/></svg></div>
 <div class="ic" style="left:843px;top:140px"><svg viewBox="0 0 12 12"><path d="M1 2h10M3 4h6v4H3zM1 10h10" fill="none" stroke="#aaa"/></svg></div>
 <div class="a" style="left:766px;top:159px;width:142px;height:1px;background:#ddd"></div>
 <div class="a" style="left:766px;top:168px;font-size:11px;font-weight:bold;color:#444;letter-spacing:-1px">TT</div>
 <div class="s" style="left:784px;top:171px">Mere</div>
 <div class="s" style="left:900px;top:171px;font-size:5px">▼</div>
 <div class="h" style="left:766px;top:194px">FILTER</div>
 <div class="s" style="left:874px;top:191px;font-size:8px">≡<span style="font-size:5px">▾</span></div>
 <div class="s" style="left:893px;top:190px;font-size:8px">å<span style="font-size:5px">▾</span></div>
 <div class="s" style="left:763px;top:211px;font-size:7px">⌵</div>
 <div class="ic" style="left:771px;top:211px;width:10px;height:10px"><svg viewBox="0 0 12 12"><path d="M2 1h5l3 3v7H2z" fill="none" stroke="#666"/><path d="M4 6h4v3H4z" fill="#888"/></svg></div>
 <div class="s" style="left:783px;top:212px">Side 1</div>
 <div class="ic" style="left:778px;top:226px;width:10px;height:10px"><svg viewBox="0 0 12 12"><rect x=".5" y="2" width="11" height="8" fill="none" stroke="#666"/><path d="M3 4h3M4.5 4v4" stroke="#666"/></svg></div>
 <div class="s" style="left:789px;top:226px">Text1</div>
 <div class="s" style="left:763px;top:241px;font-size:7px">⌵</div>
 <div class="ic" style="left:771px;top:240px;width:10px;height:10px"><svg viewBox="0 0 12 12"><path d="M2 1h5l3 3v7H2z" fill="none" stroke="#666"/><path d="M4 6h4v3H4z" fill="#888"/></svg></div>
 <div class="s" style="left:783px;top:241px">Side 2</div>
 <div class="ic" style="left:778px;top:255px;width:10px;height:10px"><svg viewBox="0 0 12 12"><rect x=".5" y="2" width="11" height="8" fill="none" stroke="#666"/><path d="M3 4h3M4.5 4v4" stroke="#666"/></svg></div>
 <div class="s" style="left:788px;top:254px;background:#e2e2e2;padding:1px 2px;color:#333">Text1#1</div>

 <div class="wm" style="left:781px;top:518px">Activate Windows</div>
 <div class="wm" style="left:781px;top:531px;font-size:6.5px">Go to Settings to activate Windows.</div>
 <div class="btn" style="left:766px;top:521px">Distribuer...</div>
 <div class="btn" style="left:766px;top:540px">Spor...</div>

 <div class="a strip" style="left:914px"></div>
 <div class="a" style="left:914px;top:132px;width:24px;height:22px;background:#b73dcb"></div>
 <div class="ic" style="left:920px;top:68px"><svg viewBox="0 0 12 12"><rect x="1" y="1" width="6" height="7" fill="#6a6ae0"/><rect x="5" y="4" width="6" height="5" fill="#4040c0"/><path d="M8 9v3" stroke="#4040c0"/></svg></div>
 <div class="ic" style="left:920px;top:92px"><svg viewBox="0 0 12 12"><rect x="1" y="1" width="10" height="4" fill="#d64a8e"/><rect x="1.5" y="6.5" width="4" height="4" fill="none" stroke="#d64a8e"/><path d="M7 7h4M7 10h4" stroke="#d64a8e"/></svg></div>
 <div class="ic" style="left:920px;top:115px"><svg viewBox="0 0 12 12"><rect x="1" y="3" width="10" height="6" fill="#a040c8"/><path d="M3 6h6" stroke="#fff" stroke-dasharray="1 1"/></svg></div>
 <div class="ic" style="left:920px;top:137px"><svg viewBox="0 0 12 12"><path d="M2 1h5l3 3v7H2z" fill="none" stroke="#fff"/><rect x="4" y="6" width="4" height="3" fill="#fff"/></svg></div>
 <div class="ic" style="left:920px;top:160px"><svg viewBox="0 0 12 12"><path d="M2 1h5l3 3v7H2z" fill="none" stroke="#b048c8" stroke-width="1.2"/><rect x="4" y="6" width="4" height="3" fill="#b048c8"/></svg></div>
 <div class="ic" style="left:920px;top:182px"><svg viewBox="0 0 12 12"><path d="M2 1h5l3 3v3M2 1v10h4" fill="none" stroke="#2a8aa0" stroke-width="1.2"/><circle cx="9" cy="9" r="2.5" fill="#2a8aa0"/></svg></div>
 <div class="ic" style="left:920px;top:204px"><svg viewBox="0 0 12 12"><rect x="1.5" y="1.5" width="9" height="9" fill="none" stroke="#6ab04a"/><path d="M6 1v10M2 5h4" stroke="#6ab04a"/></svg></div>
 <div class="ic" style="left:920px;top:226px"><svg viewBox="0 0 12 12"><path d="M2 1h5l3 3v2M2 1v10h4" fill="none" stroke="#d6be20" stroke-width="1.2"/><rect x="7" y="7" width="4.5" height="4" fill="#d6be20"/></svg></div>
 <div class="ic" style="left:920px;top:249px"><svg viewBox="0 0 12 12"><path d="M1 1h10v7H5l-3 3V8H1z" fill="#d4b820"/><path d="M3 4h6" stroke="#fff"/></svg></div>
 <div class="ic" style="left:920px;top:271px"><svg viewBox="0 0 12 12"><path d="M3 1h6v3H3zM1 4h10v5H1zM3 7h6v4H3z" fill="none" stroke="#3aa050" stroke-width="1.2"/></svg></div>
 <div class="ic" style="left:920px;top:294px"><svg viewBox="0 0 12 12"><path d="M6 1l4.5 1.5v4C10.5 9 8 10.5 6 11 4 10.5 1.5 9 1.5 6.5v-4z" fill="none" stroke="#5a5ad0" stroke-width="1.2"/></svg></div>
 <div class="ic" style="left:920px;top:316px"><svg viewBox="0 0 12 12"><path d="M1 10l5-5M3 1l4 4" stroke="#555" stroke-width="1.5"/><circle cx="8.5" cy="8.5" r="2.3" fill="none" stroke="#555" stroke-width="1.3"/></svg></div>
</div>
</body></html>
